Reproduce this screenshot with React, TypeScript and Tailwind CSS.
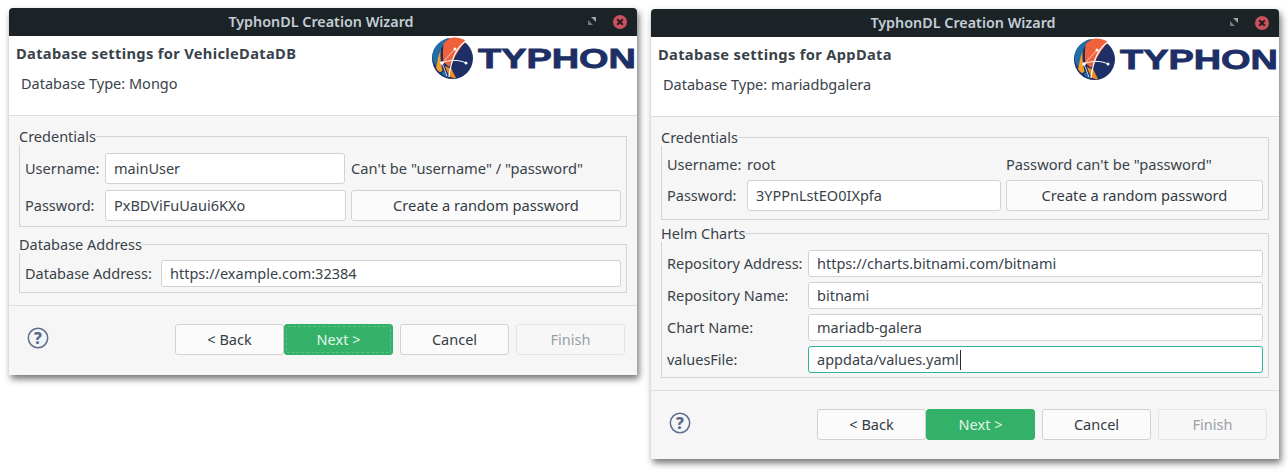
import React from "react";

const font = { fontFamily: '"Noto Sans", sans-serif' };

function Logo() {
  return (
    <svg width="208" height="46" viewBox="0 0 208 46" className="absolute left-[422px] top-[-1px]">
      <circle cx="21.5" cy="23.5" r="20.5" fill="#1d2f66" />
      <path d="M1.5 19 C3 12 8 6 18 2.8 C14 7 9.5 13 8 20 L5 31.5 C2 27 1 23 1.5 19Z" fill="#1f6fa8" />
      <path d="M12.5 8.5 C15 5 19 3 22 2.5 C28 2.5 32 3.5 35 6.5 C31 10 26 18 18 32 L12.5 27 C11.5 20 12 14 12.5 8.5Z" fill="#f0603a" />
      <path d="M5 33 L7.5 21 L10 14 C9 20 9.3 24 11.5 35.7 L9 37.3 C7 36 6 34.5 5 33Z" fill="#f5a02a" />
      <path d="M14 31 L20.5 34 L25 43 C22 43.5 20.5 42.5 18.7 41.5 C16.5 38 15 34 14 31Z" fill="#f08a24" />
      <path d="M10.5 38 L13 36 L17 42.5 C14 41.5 12 40 10.5 38Z" fill="#1f6fa8" />
      <path d="M35 6 C27 11 20.5 21 18 42" fill="none" stroke="#ffffff" strokeWidth="1.3" />
      <path d="M11 28 C18 24.5 28 24.5 35 28" fill="none" stroke="#ffffff" strokeWidth="1" />
      <path d="M11 28 L24 14" fill="none" stroke="#ffffff" strokeWidth="0.7" />
      <path d="M11 28 L16 41" fill="none" stroke="#ffffff" strokeWidth="0.8" />
      <circle cx="11" cy="28" r="1.8" fill="#fff" />
      <circle cx="35" cy="28" r="1.5" fill="#fff" />
      <circle cx="24" cy="14" r="1.5" fill="#fff" />
      <text x="47" y="33" fill="#1d2f66" textLength="158" lengthAdjust="spacingAndGlyphs" fontSize="27" fontWeight="900" stroke="#1d2f66" strokeWidth="0.8" style={{ fontFamily: '"Liberation Sans", sans-serif' }}>
        TYPHON
      </text>
    </svg>
  );
}

function TitleBar() {
  return (
    <div className="relative flex h-[28px] items-center justify-center rounded-t-[4px] bg-[#1c2326] pr-[4px] text-[14.33px] font-semibold text-[#c3ced6]">
      <span>TyphonDL Creation Wizard</span>
      <svg width="8" height="8" viewBox="0 0 8 8" className="absolute left-[579px] top-[9px]">
        <path d="M3 0 H8 V5 Z" fill="#a2a4a5" />
        <path d="M0 3 V8 H5 Z" fill="#77797a" />
      </svg>
      <svg width="16" height="16" viewBox="0 0 16 16" className="absolute left-[603px] top-[6px]">
        <circle cx="8" cy="8" r="7" fill="#c9525c" />
        <path d="M5.2 5.2 L10.8 10.8 M10.8 5.2 L5.2 10.8" stroke="#2a1c20" strokeWidth="2" />
      </svg>
    </div>
  );
}

function Input({ value, className = "", focused = false, caret = false }: { value: string; className?: string; focused?: boolean; caret?: boolean }) {
  return (
    <div className={`flex items-center rounded-[3px] border bg-white pl-[8px] ${focused ? "border-[#2bb39c]" : "border-[#d2d2d2]"} ${className}`}>
      <span>{value}</span>
      {caret && <span className="ml-px h-[20px] w-px bg-[#20303a]" />}
    </div>
  );
}

function Btn({ label, variant = "default", className = "" }: { label: string; variant?: "default" | "primary" | "disabled" | "focus"; className?: string }) {
  const style =
    variant === "primary" || variant === "focus"
      ? "border-[#33b168] bg-[#33b168] text-[#e4f5ea]"
      : variant === "disabled"
        ? "border-[#e4e4e4] bg-[#f7f7f7] text-[#9aa0a6]"
        : "border-[#d2d2d2] bg-[#fbfbfb] text-[#333c44]";
  return (
    <div className={`flex items-center justify-center rounded-[3px] border ${style} ${className}`}>
      {variant === "focus" ? (
        <div className="m-[1px] flex h-[calc(100%-2px)] w-full items-center justify-center rounded-[2px] border border-dashed border-[#5cc083]">{label}</div>
      ) : (
        label
      )}
    </div>
  );
}

function Group({ title, className = "", children }: { title: string; className?: string; children: React.ReactNode }) {
  return (
    <fieldset className={`mx-[10px] border border-[#d4d4d4] px-[5px] ${className}`}>
      <legend className="-ml-[6px] h-[18px] p-0 leading-[18px]">{title}</legend>
      {children}
    </fieldset>
  );
}

function Footer({ next }: { next: "focus" | "primary" }) {
  return (
    <div className="flex items-start pt-[18px] pl-[18px]">
      <svg width="22" height="22" viewBox="0 0 22 22" className="mt-[3px]">
        <circle cx="11" cy="11" r="9.7" fill="#f4f5f7" stroke="#5f6f8c" strokeWidth="1.5" />
        <text x="11" y="16.8" textAnchor="middle" fontSize="16" fontWeight="800" fill="#566684" style={font}>?</text>
      </svg>
      <div className="ml-[126px] flex">
        <Btn label="< Back" className="h-[31px] w-[109px]" />
        <Btn label="Next >" variant={next} className="h-[31px] w-[109px]" />
        <Btn label="Cancel" className="ml-[7px] h-[31px] w-[109px]" />
        <Btn label="Finish" variant="disabled" className="ml-[7px] h-[31px] w-[109px]" />
      </div>
    </div>
  );
}

function Header({ title, type }: { title: string; type: string }) {
  return (
    <div className="relative h-[80px] border-b border-[#dcdcdc] bg-white pl-[7px]">
      <div className="pt-[7px] text-[14.67px] leading-[20px] font-bold tracking-[0.33px]">{title}</div>
      <div className="pt-[10px] pl-[5px] leading-[20px]">{type}</div>
      <Logo />
    </div>
  );
}

export default function App() {
  return (
    <div className="flex h-[472px] w-[1288px] items-start gap-[14px] bg-white pt-[8px] pl-[9px] text-[14.5px] text-[#39424a]" style={font}>
      <div className="h-[367px] w-[628px] rounded-t-[4px] bg-[#f6f6f6] shadow-[2px_4px_7px_rgba(0,0,0,0.55)]">
        <TitleBar />
        <Header title="Database settings for VehicleDataDB" type="Database Type: Mongo" />
        <div className="h-[190px] border-b border-[#dedede] pt-[11px]">
          <Group title="Credentials" className="h-[100px]">
            <div className="mt-[8px] flex h-[31px] items-center">
              <span className="w-[80px]">Username:</span>
              <Input value="mainUser" className="h-[31px] w-[240px]" />
              <span className="mb-[2px] ml-[6px] text-[14.67px]">Can't be "username" / "password"</span>
            </div>
            <div className="mt-[6px] flex h-[31px] items-center">
              <span className="w-[80px]">Password:</span>
              <Input value="PxBDViFuUaui6KXo" className="h-[31px] w-[241px]" />
              <Btn label="Create a random password" className="ml-[5px] h-[31px] w-[270px] pb-[2px] text-[14.67px]" />
            </div>
          </Group>
          <Group title="Database Address" className="mt-[8px] h-[58px]">
            <div className="mt-[7px] flex h-[27px] items-center">
              <span className="w-[136px]">Database Address:</span>
              <Input value="https://example.com:32384" className="h-[27px] w-[460px]" />
            </div>
          </Group>
        </div>
        <Footer next="focus" />
      </div>

      <div className="mt-px h-[450px] w-[628px] rounded-t-[4px] bg-[#f6f6f6] shadow-[2px_4px_7px_rgba(0,0,0,0.55)]">
        <TitleBar />
        <Header title="Database settings for AppData" type="Database Type: mariadbgalera" />
        <div className="h-[274px] border-b border-[#dedede] pt-[11px]">
          <Group title="Credentials" className="h-[92px]">
            <div className="mt-[7px] flex h-[24px] items-center">
              <span className="w-[80px]">Username:</span>
              <span className="w-[259px]">root</span>
              <span className="mb-[2px] text-[14.67px]">Password can't be "password"</span>
            </div>
            <div className="mt-[3px] flex h-[31px] items-center">
              <span className="w-[80px]">Password:</span>
              <Input value="3YPPnLstEO0IXpfa" className="h-[31px] w-[254px]" />
              <Btn label="Create a random password" className="ml-[5px] h-[31px] w-[257px] pb-[2px] text-[14.67px]" />
            </div>
          </Group>
          <Group title="Helm Charts" className="mt-[4px] h-[154px]">
            <div className="mt-[8px] flex flex-col gap-[5px]">
              {[
                ["Repository Address:", "https://charts.bitnami.com/bitnami"],
                ["Repository Name:", "bitnami"],
                ["Chart Name:", "mariadb-galera"],
              ].map(([l, v]) => (
                <div key={l} className="flex h-[27px] items-center">
                  <span className="w-[141px]">{l}</span>
                  <Input value={v} className="h-[27px] w-[455px]" />
                </div>
              ))}
              <div className="flex h-[27px] items-center">
                <span className="w-[141px]">valuesFile:</span>
                <Input value="appdata/values.yaml" focused caret className="h-[27px] w-[455px]" />
              </div>
            </div>
          </Group>
        </div>
        <Footer next="primary" />
      </div>
    </div>
  );
}
